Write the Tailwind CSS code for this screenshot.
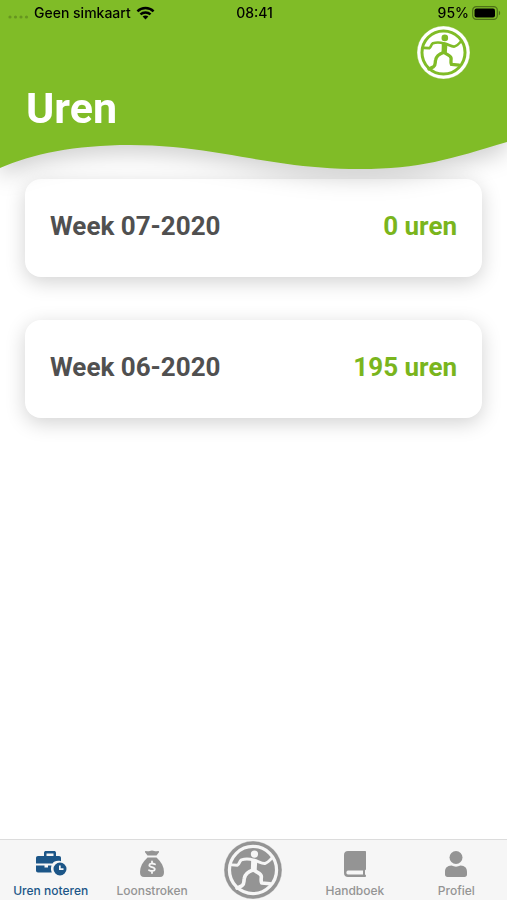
<!DOCTYPE html>
<html lang="nl">
<head>
<meta charset="utf-8">
<meta name="viewport" content="width=device-width, initial-scale=1">
<title>Uren</title>
<script src="https://cdn.jsdelivr.net/npm/@tailwindcss/browser@4"></script>
</head>
<body class="bg-white">
<svg class="hidden" aria-hidden="true">
  <!-- Round emblem: outer disc in currentColor, ring and runner in the group's fill/stroke -->
  <symbol id="runner" viewBox="0 0 160 160">
    <circle cx="80" cy="80" r="80" fill="currentColor"/>
    <circle cx="80" cy="80" r="65" fill="none" stroke-width="9"/>
    <circle cx="84" cy="36" r="10" stroke="none"/>
    <path fill="none" stroke-linecap="round" stroke-linejoin="round" stroke-width="8" d="M82 53C70 49 58 49 48 52C42 55 43 64 37 67L21 66M84 53C95 56 104 63 113 62C121 60 127 53 133 46"/>
    <path stroke="none" d="M75 50L92 52L90 82H74Z"/>
    <path fill="none" stroke-linecap="round" stroke-linejoin="round" stroke-width="10" d="M80 80C68 84 58 92 56 103C54 111 57 118 50 123L36 130M82 80C92 88 103 89 103 98C103 105 101 110 104 116L127 118"/>
  </symbol>
</svg>
<div class="flex min-h-screen flex-col font-['Roboto','Noto_Sans',sans-serif]">
  <header class="pointer-events-none relative z-10 drop-shadow-[0_9px_11px_rgb(0_0_0/0.18)]">
    <div class="bg-[#80bc27]">
      <div class="grid h-[26px] grid-cols-3 items-center pr-[6px] pl-2 font-['Inter',sans-serif] text-[14px] leading-[18px] font-medium text-black">
        <div class="flex items-center gap-[5px] whitespace-nowrap">
          <svg class="h-3 w-[21px] shrink-0 text-black/20" viewBox="0 0 21 12" fill="currentColor" aria-hidden="true"><circle cx="2" cy="10" r="1.6"/><circle cx="7.5" cy="10" r="1.6"/><circle cx="13" cy="10" r="1.6"/><circle cx="18.500" cy="10" r="1.6"/></svg>
          <span>Geen simkaart</span>
          <svg class="h-[14px] w-[19px] shrink-0" viewBox="0 0 20 14" fill="none" stroke="black" stroke-width="2.600" aria-hidden="true"><path d="M1.500 5.200C6.200.6 13.800.6 18.500 5.200M4.700 8.500C7.700 5.700 12.300 5.700 15.300 8.500"/><path fill="black" stroke="none" d="M10 13.800L7 10.800C8.600 9.200 11.400 9.200 13 10.800Z"/></svg>
        </div>
        <time class="text-center">08:41</time>
        <div class="flex items-center justify-end gap-[3px]">
          <span>95%</span>
          <svg class="h-[14px] w-[29px]" viewBox="0 0 29 14" aria-hidden="true"><rect x=".7" y=".7" width="24.600" height="12.600" rx="3.600" fill="none" stroke="#000" stroke-opacity=".4" stroke-width="1.200"/><rect x="2.500" y="2.500" width="20.500" height="9" rx="2" fill="#000"/><path d="M26.800 4.700C28.600 5.400 28.600 8.600 26.800 9.300Z" fill="#000" fill-opacity=".4"/></svg>
        </div>
      </div>
      <div class="flex h-[54px] justify-end pr-[37px]">
        <svg class="size-[53px] fill-[#80bc27] stroke-[#80bc27] text-white" role="img" aria-label="Logo"><use href="#runner"/></svg>
      </div>
      <h1 class="px-[26px] text-[43px] leading-[56px] font-bold text-white">Uren</h1>
    </div>
    <svg class="-mt-px block h-[35px] w-full" viewBox="0 0 507 35" preserveAspectRatio="none" aria-hidden="true"><path fill="#80bc27" d="M0 0H507V7C450 24 420 34 360 34C270 34 215 10 130 10C75 10 32 19 0 33Z"/></svg>
  </header>
  <main class="flex-1 px-[25px] pt-[9px] pb-10">
    <ul class="flex flex-col gap-[43px]">
      <li><a href="#week-07" class="flex h-[98px] items-center justify-between rounded-2xl bg-white px-[25px] pb-[5px] text-[26px] leading-8 font-bold shadow-[0_5px_20px_rgb(0_0_0/0.18)]"><span class="text-[#505050]">Week 07-2020</span><span class="text-[#7ab51d]">0 uren</span></a></li>
      <li><a href="#week-06" class="flex h-[98px] items-center justify-between rounded-2xl bg-white px-[25px] pb-[5px] text-[26px] leading-8 font-bold shadow-[0_5px_20px_rgb(0_0_0/0.18)]"><span class="text-[#505050]">Week 06-2020</span><span class="text-[#7ab51d]">195 uren</span></a></li>
    </ul>
  </main>
  <nav class="sticky bottom-0 grid h-[61px] grid-cols-5 border-t border-[#dcdcdc] bg-[#f6f6f6] font-['Inter',sans-serif] text-[12px] leading-4 font-medium text-[#949494]">
    <a href="#uren" aria-current="page" class="flex flex-col items-center justify-end gap-[5px] pb-[1px] whitespace-nowrap text-[#1c5688]">
      <svg class="h-[28px] w-[32px]" viewBox="0 0 32 28" fill="currentColor" aria-hidden="true"><path fill-rule="evenodd" d="M9 6V3C9 1.600 9.800 1 11 1H19C20.200 1 21 1.600 21 3V6H24C25.400 6 26 6.800 26 8V11.200C21.500 10.200 19 11.500 17.500 13.500H1V8C1 6.800 1.800 6 3 6ZM11.500 6H18.500V3.500H11.500Z"/><path d="M1 15.500H9.500V17.500H13V15.500H16.500C15.700 18 15.800 20 16.800 22.500H3C1.800 22.500 1 21.800 1 20.500Z"/><path fill-rule="evenodd" d="M25 12.500A6.500 6.500 0 1 1 25 25.500A6.500 6.500 0 0 1 25 12.500ZM24 15.500V20H28.500V18.300H25.700V15.500Z"/></svg>
      <span>Uren noteren</span>
    </a>
    <a href="#loonstroken" class="flex flex-col items-center justify-end gap-[5px] pb-[1px] whitespace-nowrap">
      <svg class="h-[28px] w-[26px]" viewBox="0 0 26 28" fill="currentColor" aria-hidden="true"><path d="M7 1C9.500 2 11 .4 13 .4S16.500 2 19 1C20 .8 20.300 1.700 19.800 2.400L17.500 5.500H8.500L6.200 2.400C5.700 1.700 6 .8 7 1Z"/><path d="M8.500 7.500H17.500C22.500 12 25 17 25 22C25 25.500 23.800 27 21 27H5C2.200 27 1 25.500 1 22C1 17 3.500 12 8.500 7.500Z"/><path fill="none" stroke="#f6f6f6" stroke-width="1.800" stroke-linecap="round" d="M16 14.300C13.500 13 10.300 13.300 10.300 15.300C10.300 17.700 15.800 16.600 15.800 19.200C15.800 21.300 12.500 21.500 10 20.200M13 11.500V13.200M13 21.300V23"/></svg>
      <span>Loonstroken</span>
    </a>
    <a href="#home" aria-label="Home" class="flex items-center justify-center">
      <svg class="size-[58px] fill-[#f6f6f6] stroke-[#f6f6f6]" aria-hidden="true"><use href="#runner"/></svg>
    </a>
    <a href="#handboek" class="flex flex-col items-center justify-end gap-[5px] pb-[1px] whitespace-nowrap">
      <svg class="h-[28px] w-[24px]" viewBox="0 0 24 28" fill="currentColor" aria-hidden="true"><path fill-rule="evenodd" d="M5 1H22C22.700 1 23 1.400 23 2V19C23 19.700 22.600 20 22 20.300V24.500C22.700 24.800 23 25 23 25.700S22.600 27 22 27H5C2.500 27 1 25.500 1 23V5C1 2.500 2.500 1 5 1ZM5 20.500C2.900 20.500 2.900 24.500 5 24.500H20V20.500Z"/></svg>
      <span>Handboek</span>
    </a>
    <a href="#profiel" class="flex flex-col items-center justify-end gap-[5px] pb-[1px] whitespace-nowrap">
      <svg class="h-[28px] w-[24px]" viewBox="0 0 24 28" fill="currentColor" aria-hidden="true"><circle cx="12" cy="7.500" r="6.500"/><path d="M7.500 15.500C10.500 17 13.500 17 16.500 15.500C21 15.800 23 18 23 22V24.500C23 26 22 27 20.500 27H3.500C2 27 1 26 1 24.500V22C1 18 3 15.800 7.500 15.500Z"/></svg>
      <span>Profiel</span>
    </a>
  </nav>
</div>
</body>
</html>
